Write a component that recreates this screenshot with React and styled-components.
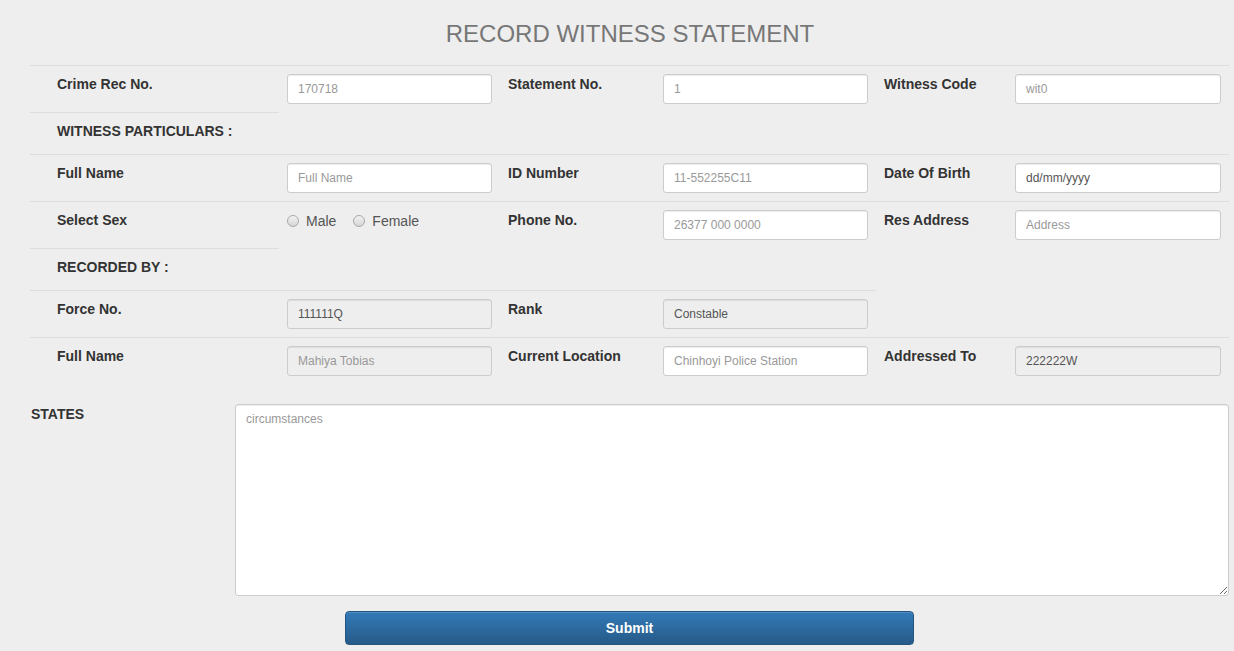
import React from 'react';
import styled, { createGlobalStyle } from 'styled-components';

const GlobalStyle = createGlobalStyle`
  html, body {
    margin: 0;
    padding: 0;
    background: #eeeeee;
    font-family: 'Liberation Sans', Arial, sans-serif;
    font-size: 14px;
    color: #333;
  }
  * {
    box-sizing: border-box;
  }
`;

const rows = [
  {
    cells: [
      { label: 'Crime Rec No.' },
      { input: { placeholder: '170718' } },
      { label: 'Statement No.' },
      { input: { placeholder: '1' } },
      { label: 'Witness Code' },
      { input: { placeholder: 'wit0' } },
    ],
  },
  { cells: [{ label: 'WITNESS PARTICULARS :' }] },
  {
    cells: [
      { label: 'Full Name' },
      { input: { placeholder: 'Full Name' } },
      { label: 'ID Number' },
      { input: { placeholder: '11-552255C11' } },
      { label: 'Date Of Birth' },
      { input: { value: 'dd/mm/yyyy' } },
    ],
  },
  {
    cells: [
      { label: 'Select Sex' },
      { radios: ['Male', 'Female'] },
      { label: 'Phone No.' },
      { input: { placeholder: '26377 000 0000' } },
      { label: 'Res Address' },
      { input: { placeholder: 'Address' } },
    ],
  },
  { cells: [{ label: 'RECORDED BY :' }] },
  {
    cells: [
      { label: 'Force No.' },
      { input: { value: '111111Q', disabled: true } },
      { label: 'Rank' },
      { input: { value: 'Constable', disabled: true } },
    ],
  },
  {
    cells: [
      { label: 'Full Name' },
      { input: { placeholder: 'Mahiya Tobias', disabled: true } },
      { label: 'Current Location' },
      { input: { placeholder: 'Chinhoyi Police Station' } },
      { label: 'Addressed To' },
      { input: { value: '222222W', disabled: true } },
    ],
  },
];

const App = () => {
  return (
    <>
      <GlobalStyle />
      <Page>
        <Title>RECORD WITNESS STATEMENT</Title>
        <Table>
          {rows.map((row, i) => (
            <Row key={i}>
              {row.cells.map((cell, j) => (
                <Cell key={j} $first={j === 0}>
                  {cell.label && <Label>{cell.label}</Label>}
                  {cell.input && (
                    <Input
                      type="text"
                      placeholder={cell.input.placeholder}
                      defaultValue={cell.input.value}
                      disabled={cell.input.disabled}
                    />
                  )}
                  {cell.radios && (
                    <Radios>
                      {cell.radios.map((r) => (
                        <RadioLabel key={r}>
                          <Radio type="radio" name="sex" />
                          {r}
                        </RadioLabel>
                      ))}
                    </Radios>
                  )}
                </Cell>
              ))}
            </Row>
          ))}
        </Table>
        <StatesRow>
          <StatesLabel>STATES</StatesLabel>
          <TextArea placeholder="circumstances" />
        </StatesRow>
        <ButtonRow>
          <SubmitButton type="button">Submit</SubmitButton>
        </ButtonRow>
      </Page>
    </>
  );
};

const Page = styled.div`
  width: 1234px;
  padding-top: 21px;
`;

const Title = styled.h3`
  margin: 0 0 18px;
  height: 26px;
  line-height: 26px;
  text-align: center;
  font-size: 24px;
  font-weight: normal;
  color: #777;
  padding-left: 26px;
`;

const Table = styled.div`
  margin: 0 6px 0 30px;
  display: flex;
  flex-direction: column;
`;

const Row = styled.div`
  display: grid;
  grid-template-columns: 249px 221px 155px 221px 131px 222px;
`;

const Cell = styled.div`
  border-top: 1px solid #dddddd;
  padding: 8px 8px 8px ${({ $first }) => ($first ? '27px' : '8px')};
`;

const Label = styled.label`
  display: inline-block;
  margin-bottom: 5px;
  font-weight: bold;
  font-size: 14px;
  line-height: 20px;
  color: #333;
`;

const Input = styled.input`
  display: block;
  width: 100%;
  height: 30px;
  padding: 5px 10px;
  font-family: 'Liberation Sans', Arial, sans-serif;
  font-size: 12px;
  line-height: 1.5;
  color: #555;
  background: #fff;
  border: 1px solid #ccc;
  border-radius: 3px;
  box-shadow: inset 0 1px 1px rgba(0, 0, 0, 0.075);
  &::placeholder {
    color: #999;
  }
  &:disabled {
    background: #eeeeee;
    color: #555;
    opacity: 1;
  }
`;

const Radios = styled.div`
  display: flex;
  gap: 17px;
  height: 20px;
  align-items: center;
  margin-top: 1px;
`;

const RadioLabel = styled.label`
  display: inline-flex;
  align-items: center;
  gap: 7px;
  font-size: 14px;
  color: #555;
`;

const Radio = styled.input`
  appearance: none;
  margin: 0;
  width: 12px;
  height: 12px;
  border-radius: 50%;
  border: 1px solid #a9a9a9;
  background: linear-gradient(to bottom, #f2f2f2, #d6d6d6);
`;

const StatesRow = styled.div`
  display: flex;
  margin-top: 20px;
  padding-left: 31px;
  padding-right: 5px;
`;

const StatesLabel = styled.label`
  width: 204px;
  flex-shrink: 0;
  font-weight: bold;
  font-size: 14px;
  line-height: 20px;
  color: #333;
`;

const TextArea = styled.textarea`
  flex: 1;
  height: 192px;
  padding: 5px 10px;
  font-family: 'Liberation Sans', Arial, sans-serif;
  font-size: 12px;
  line-height: 1.5;
  color: #555;
  background: #fff;
  border: 1px solid #ccc;
  border-radius: 3px;
  box-shadow: inset 0 1px 1px rgba(0, 0, 0, 0.075);
  &::placeholder {
    color: #999;
  }
`;

const ButtonRow = styled.div`
  padding: 15px 0 0 345px;
`;

const SubmitButton = styled.button`
  width: 569px;
  height: 34px;
  font-family: 'Liberation Sans', Arial, sans-serif;
  font-size: 14px;
  font-weight: bold;
  color: #fff;
  background: linear-gradient(to bottom, #337ab7 0%, #265a88 100%);
  border: 1px solid #245580;
  border-radius: 4px;
  box-shadow: inset 0 1px 0 rgba(255, 255, 255, 0.15), 0 1px 1px rgba(0, 0, 0, 0.075);
  cursor: pointer;
`;

export default App;
